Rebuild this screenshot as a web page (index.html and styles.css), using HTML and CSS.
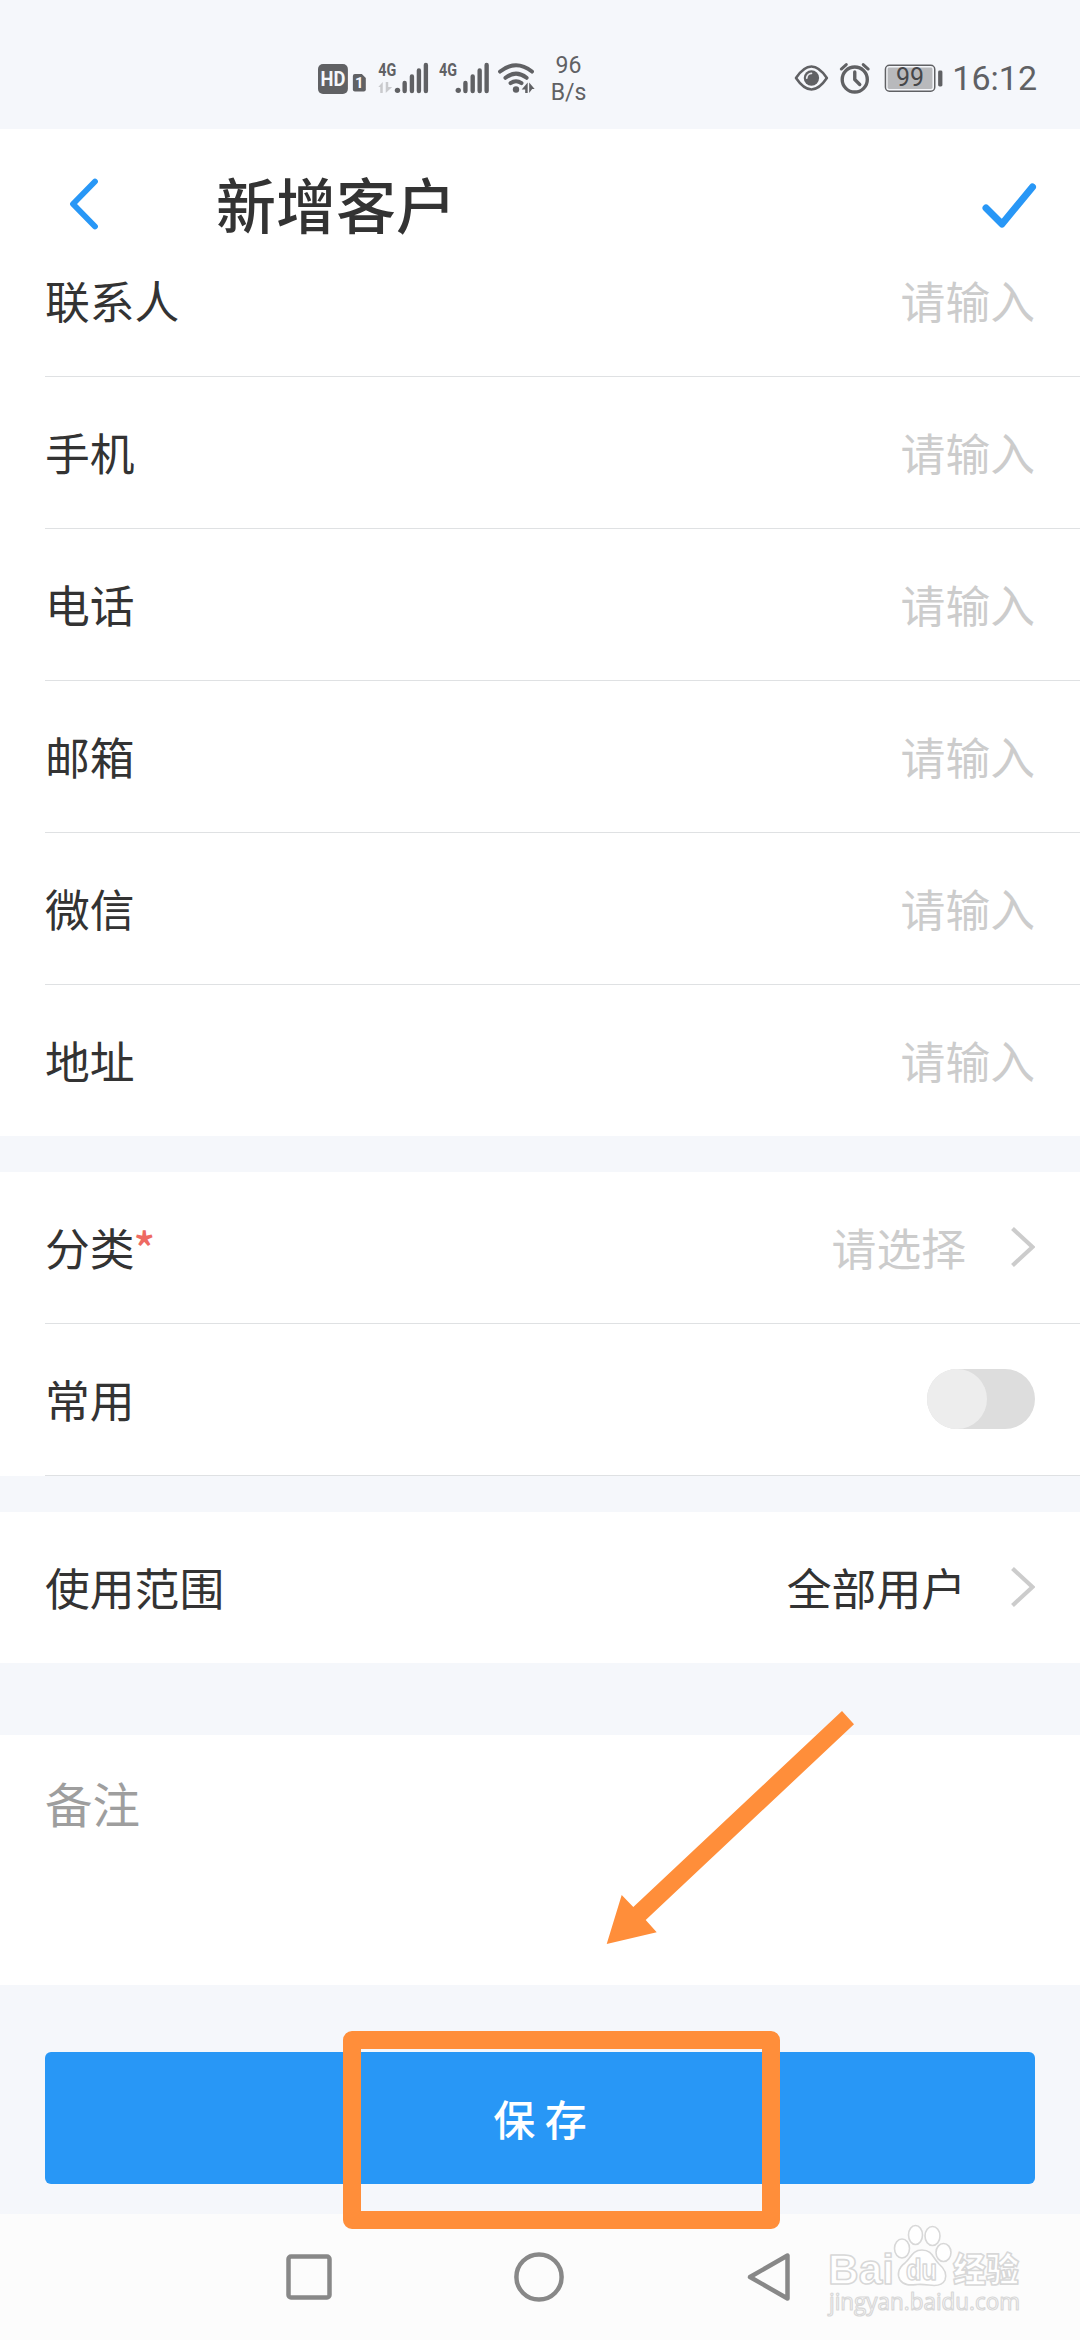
FILE: index.html
```html
<!DOCTYPE html>
<html lang="zh-CN">
<head>
<meta charset="utf-8">
<title>新增客户</title>
<link rel="stylesheet" href="styles.css">
</head>
<body>
<div class="screen">
  <div class="status">
    <svg class="signals" width="224" height="40" viewBox="318 58 224 40">
      <rect x="318" y="64" width="30" height="30" rx="5" fill="#606164"/>
      <text x="333" y="86" class="hd" textLength="25" lengthAdjust="spacingAndGlyphs">HD</text>
      <path d="M355 74h7l4 4v11.500a2 2 0 0 1-2 2h-9a2 2 0 0 1-2-2V76a2 2 0 0 1 2-2z" fill="#606164"/>
      <text x="359.500" y="88.500" class="sim">1</text>
      <text x="378.500" y="76.500" class="net" textLength="18" lengthAdjust="spacingAndGlyphs">4G</text>
      <path d="M378.500 87l4.500-5v11h-2.500v-6zM386 82h2.500v5h4l-6.500 6z" fill="#c9cacd"/>
      <g id="bars" fill="#606164" stroke="#606164" stroke-linecap="round">
        <circle cx="397.800" cy="90.400" r="2.700" stroke="none"/>
        <path d="M405 83v8M412.300 76.500v14.500M419.300 70.500v20.500M426.300 65v26" stroke-width="4.400"/>
      </g>
      <text x="439.500" y="76.500" class="net" textLength="18" lengthAdjust="spacingAndGlyphs">4G</text>
      <use href="#bars" x="61"/>
      <g fill="none" stroke="#606164" stroke-width="4" stroke-linecap="round">
        <path d="M500.800 71.500Q516.800 59 532.800 71.500M506.200 77.800Q516.800 69.500 527.400 77.800M511.300 83.200Q516.800 79.200 522.300 83.200"/>
      </g>
      <circle cx="516.800" cy="89.500" r="3.200" fill="#606164"/>
      <path d="M522.500 89.500l6-7v10.500h-2.500v-3.500zM530 82.500l5.500 6.500h-2.500l-3 4z" fill="#606164"/>
    </svg>
    <div class="speed"><span>96</span><span>B/s</span></div>
    <svg class="tray" width="150" height="40" viewBox="794 58 150 40">
      <g fill="none" stroke="#606164">
        <path d="M796 78Q811.500 55 827 78Q811.500 101 796 78z" stroke-width="2.600" stroke-linejoin="round"/>
        <circle cx="855" cy="79.500" r="12.600" stroke-width="3.400"/>
        <path d="M855 72v7.500l5 5" stroke-width="3.400" stroke-linecap="round" stroke-linejoin="round"/>
        <path d="M841.500 69l5-4.500M868.500 69l-5-4.500" stroke-width="3" stroke-linecap="round"/>
        <rect x="885.800" y="65.300" width="49.500" height="26" rx="4" stroke-width="1.500"/>
      </g>
      <circle cx="811.500" cy="78" r="7.700" fill="#606164"/>
      <path d="M806.800 78a5 5 0 0 1 4.700-4.700" fill="none" stroke="#e8e9ed" stroke-width="1.800" stroke-linecap="round"/>
      <rect x="888" y="67.500" width="45" height="21.500" rx="1.500" fill="#b8b9bc"/>
      <text x="910.500" y="86.500" class="pct">99</text>
      <rect x="938.700" y="70.500" width="4.300" height="16" rx="1.500" fill="#606164"/>
    </svg>
    <span class="clock">16:12</span>
  </div>

  <header class="header">
    <svg class="back" width="34" height="56" viewBox="0 0 34 56"><path d="M29 5.500L7 28L29 50.500" fill="none" stroke="#2897f6" stroke-width="5.800" stroke-linecap="round" stroke-linejoin="round"/></svg>
    <h1 class="title">新增客户</h1>
    <svg class="done" width="56" height="48" viewBox="0 0 56 48"><path d="M5 26L21 42L51.500 5" fill="none" stroke="#2897f6" stroke-width="7" stroke-linecap="round" stroke-linejoin="round"/></svg>
  </header>

  <section class="group">
    <div class="row"><span>联系人</span><span class="hint">请输入</span></div>
    <div class="row"><span>手机</span><span class="hint">请输入</span></div>
    <div class="row"><span>电话</span><span class="hint">请输入</span></div>
    <div class="row"><span>邮箱</span><span class="hint">请输入</span></div>
    <div class="row"><span>微信</span><span class="hint">请输入</span></div>
    <div class="row last"><span>地址</span><span class="hint">请输入</span></div>
  </section>

  <section class="group">
    <div class="row"><span>分类<span class="required">*</span></span><span class="hint">请选择</span><svg class="chevron" width="24" height="42" viewBox="0 0 24 42"><path d="M1.500 2.500L21.500 21L1.500 39.500" fill="none" stroke="#ccc" stroke-width="4.200"/></svg></div>
    <div class="row"><span>常用</span><span class="switch"></span></div>
  </section>

  <section class="group">
    <div class="row last"><span>使用范围</span><span class="value">全部用户</span><svg class="chevron" width="24" height="42" viewBox="0 0 24 42"><path d="M1.500 2.500L21.500 21L1.500 39.500" fill="none" stroke="#ccc" stroke-width="4.200"/></svg></div>
  </section>

  <section class="note">备注</section>

  <button class="save">保 存</button>

  <nav class="nav">
    <svg width="46" height="46" viewBox="0 0 46 46"><rect x="2.500" y="2.500" width="41" height="41" rx="2.500"/></svg>
    <svg width="50" height="50" viewBox="0 0 50 50"><circle cx="25" cy="25" r="22.600"/></svg>
    <svg width="46" height="50" viewBox="0 0 46 50"><path d="M41.500 3.500V46.500L4 25z"/></svg>
  </nav>

  <div class="highlight"></div>
  <svg class="arrow" width="250" height="236" viewBox="606 1710 250 236"><path d="M842 1711L854 1724.300L645.700 1920L656.700 1932.300L606.700 1944L621.700 1895L633.300 1907z" fill="#ff8e3a"/></svg>
  <svg class="watermark" width="200" height="100" viewBox="825 2220 200 100">
    <g class="outlined">
      <text x="828" y="2284" class="bai" textLength="66" lengthAdjust="spacingAndGlyphs">Bai</text>
      <ellipse cx="902" cy="2248.500" rx="7.500" ry="9.500"/>
      <ellipse cx="915.500" cy="2235" rx="7" ry="9.500"/>
      <ellipse cx="932.500" cy="2236" rx="7.500" ry="9.500"/>
      <ellipse cx="943.500" cy="2252.500" rx="7.500" ry="9"/>
      <path d="M922 2250c-10 0-11 8-17 13c-7 5-8 12-5 17c4 6 11 5 17 4.500c4-.5 8 0 12 .5c6 1 13 1 16-5c2-6 0-11-6-16c-6-6-7-14-17-14z"/>
      <text x="921.500" y="2280" class="du" textLength="31" lengthAdjust="spacingAndGlyphs">du</text>
      <text x="953" y="2282" class="exp" textLength="66" lengthAdjust="spacingAndGlyphs">经验</text>
      <text x="829" y="2309.500" class="url" textLength="191" lengthAdjust="spacingAndGlyphs">jingyan.baidu.com</text>
    </g>
  </svg>
</div>
</body>
</html>
```
FILE: styles.css
```css
* { box-sizing: border-box; }

body {
  margin: 0;
  background: #f5f7fb;
  color: #333;
  font-family: "Noto Sans CJK SC", sans-serif;
}

.screen {
  position: relative;
  display: flex;
  flex-direction: column;
  width: 1080px;
  height: 2340px;
  overflow: hidden;
}

.status {
  display: flex;
  align-items: center;
  flex: none;
  height: 129px;
  padding: 27px 43px 0 318px;
  color: #606164;
  font-family: Roboto, sans-serif;
}

.speed {
  display: flex;
  flex-direction: column;
  align-items: center;
  width: 54px;
  padding: 1px 0 0 1px;
  font-size: 23px;
  line-height: 27px;
}

.tray { margin-left: 199px; }

.clock {
  margin-left: 9px;
  font-size: 34px;
  line-height: 40px;
}

.hd, .sim, .net, .pct { font-family: Roboto, sans-serif; }
.hd { font-size: 20px; font-weight: 700; fill: #f5f7fb; text-anchor: middle; }
.sim { font-size: 15px; font-weight: 700; fill: #f5f7fb; text-anchor: middle; }
.net { font-size: 19px; font-weight: 700; fill: #606164; }
.pct { font-size: 25px; fill: #46474a; text-anchor: middle; }

.header {
  display: flex;
  align-items: center;
  flex: none;
  height: 152px;
  margin-bottom: -56px;
  padding: 0 43px 0 66px;
}

.back { margin-bottom: 2px; }
.done { margin-top: 2px; }

.title {
  flex: 1;
  margin: 0 0 5px 116px;
  font-size: 60px;
  font-weight: 500;
  line-height: 84px;
}

.header, .group, .note { background: #fff; }

.group { flex: none; padding-left: 45px; }
.group + .group { margin-top: 36px; }
.header + .group { background: none; position: relative; }
.header + .group::before {
  content: "";
  position: absolute;
  z-index: -1;
  inset: 0;
  background: #fff;
}

.row {
  display: flex;
  align-items: center;
  height: 152px;
  padding: 0 45px 1px 0;
  border-bottom: 1px solid #dfe1e3;
  font-size: 44.800px;
  line-height: 66px;
}

.row.last { height: 151px; border-bottom: 0; }

.hint, .value, .switch { margin-left: auto; }
.hint { color: #ccc; }
.required { margin-left: -1px; color: #ee6a62; font-weight: 500; }
.chevron { margin-left: 45px; }

.switch {
  width: 108px;
  height: 60px;
  border-radius: 30px;
  background: #ddd;
}

.switch::before {
  content: "";
  display: block;
  width: 60px;
  height: 60px;
  border-radius: 50%;
  background: #ededed;
}

.note {
  flex: none;
  height: 250px;
  margin-top: 72px;
  padding: 33px 45px;
  color: #9e9e9e;
  font-size: 47.500px;
  line-height: 70px;
}

.save {
  flex: none;
  height: 132px;
  margin: 67px 45px 30px;
  padding: 0;
  border: 0;
  border-radius: 6px;
  background: #2897f6;
  color: #fff;
  font: 500 42px/60px "Noto Sans CJK SC", sans-serif;
}

.nav {
  display: flex;
  align-items: center;
  justify-content: space-between;
  flex: 1;
  padding: 0 288px 0 286px;
  background: #fcfcfc;
}

.nav svg { fill: none; stroke: #888; stroke-width: 4.500; stroke-linejoin: round; }

.highlight {
  position: absolute;
  left: 343px;
  top: 2031px;
  width: 437px;
  height: 198px;
  border: 18px solid #ff8e3a;
  border-radius: 9px;
}

.arrow { position: absolute; left: 606px; top: 1710px; }
.watermark { position: absolute; left: 825px; top: 2220px; }

.outlined {
  fill: #fff;
  stroke: #d8d8d8;
  stroke-width: 1.600;
  stroke-linejoin: round;
}

.bai { font: 700 43px "Liberation Sans", sans-serif; }
.du { font: 700 29px "Liberation Sans", sans-serif; text-anchor: middle; }
.exp { font: 900 34px "Noto Sans CJK SC", sans-serif; }
.url { font: 400 23px "Open Sans", sans-serif; stroke-width: 1.200; }
```
